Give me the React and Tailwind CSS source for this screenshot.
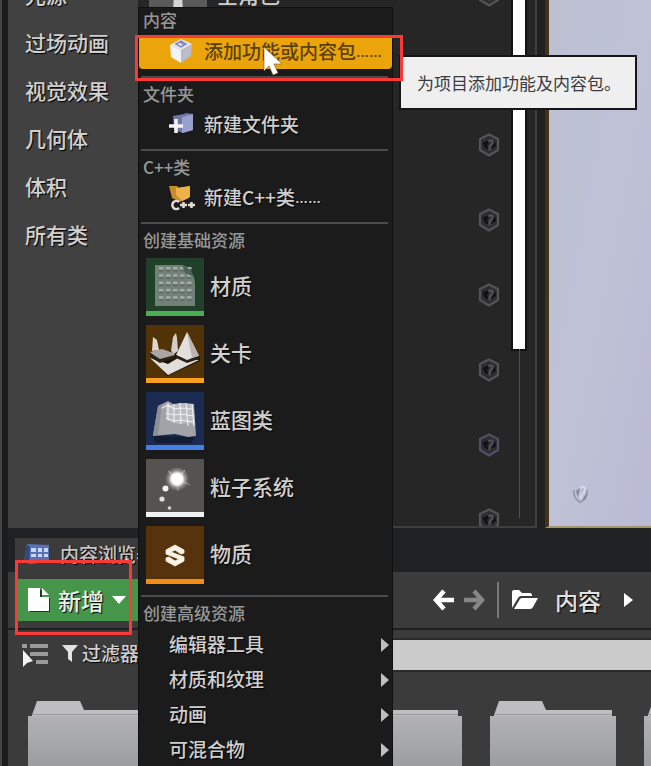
import React from "react";

const categories = ["光源", "过场动画", "视觉效果", "几何体", "体积", "所有类"];
const advanced = ["编辑器工具", "材质和纹理", "动画", "可混合物"];

function HelpIcon({ ring = "#545456" }) {
  return (
    <svg viewBox="0 0 24 24" className="h-6 w-6" aria-hidden="true">
      <path d="M12 1.500 21 6v11l-9 5.500L3 17V6z" fill="#2e2e30" stroke={ring} strokeWidth="2.200" strokeLinejoin="round" />
      <path d="M5.500 10 10 7.500 12 9l-2 3 2 5-4-2zM14 16l4-8 1 5z" fill="#111113" />
      <path d="M11.500 8.500c2-2 5-1 4 1.500-.6 1.500-2.500 2-3 4.500v3" fill="none" stroke={ring} strokeWidth="2" />
    </svg>
  );
}

function MaterialArt() {
  const cells = [];
  for (let r = 0; r < 5; r++) for (let c = 0; c < 5; c++) cells.push([c, r]);
  return (
    <svg viewBox="0 0 58 53" className="h-full w-full" aria-hidden="true">
      <rect width="58" height="53" fill="#20402a" />
      <path d="M9 7h28q6 2 10 10 2 4 2 9v22H9z" fill="#738078" />
      {cells.map(([c, r]) => (
        <g key={c + "-" + r}>
          <rect x={13 + c * 7} y={9 + r * 7.3} width="4.500" height="2.400" fill="#a3aca6" />
          <rect x={13 + c * 7} y={12 + r * 7.3} width="4.500" height="1.500" fill="#5c6b61" />
        </g>
      ))}
      <path d="M36 7q8 2 12 12l-9-4z" fill="#4c6453" />
    </svg>
  );
}

function LevelArt() {
  return (
    <svg viewBox="0 0 58 53" className="h-full w-full" aria-hidden="true">
      <rect width="58" height="53" fill="#513307" />
      <path d="M4 30 21 51l33-15v-5L30 24z" fill="#1d1509" />
      <path d="M4 33 22 39l10-6 21 2-31 15z" fill="#e2dedc" />
      <path d="m4 27 12-3 12 4 1 3-15 5z" fill="#aaa5a4" />
      <path d="m4 28 10 6 15-4v3l-15 5-10-6z" fill="#2c2116" />
      <path d="m6 26 1-14 4 3 2 10z" fill="#e1d7cd" />
      <path d="m25 26 2-14 3-4 1 5 1 13-4 3z" fill="#d4ceca" />
      <path d="M30 30 41 7l12 24-12 4z" fill="#e3dfdf" />
      <path d="m41 7 12 24-7 2z" fill="#bbb5b4" />
      <path d="m30 30 11 5 12-4v3l-12 4-11-5z" fill="#2c2116" />
    </svg>
  );
}

function BlueprintArt() {
  return (
    <svg viewBox="0 0 58 53" className="h-full w-full" aria-hidden="true">
      <rect width="58" height="53" fill="#1a2a50" />
      <path d="m7 44 42 1-4 6H10z" fill="#131c34" />
      <path d="M12 14 22 9l5 3 8-1 13 1 2 32-8 1-13-3-22 2z" fill="#a0a3a8" />
      <path d="m20 12 7 1 8-2 12 1 2 20-8-1-8 1-13-4z" fill="#b9bcc2" />
      <path d="M22 11v17M28 12v19M34 11l1 21M40 11l2 23M46 12l2 22M14 17l8-4 6 4 7-1 12 1M20 21l8 2 7-1 13 2M20 26l8 3 7-1 13 2" stroke="#eceef0" strokeWidth="1.200" fill="none" />
      <path d="m7 43 5-29 4-2-4 31z" fill="#8b8e94" />
    </svg>
  );
}

function ParticleArt() {
  return (
    <svg viewBox="0 0 58 53" className="h-full w-full" aria-hidden="true">
      <defs>
        <radialGradient id="glow">
          <stop offset="0.450" stopColor="#fff" />
          <stop offset="0.700" stopColor="#fff" stopOpacity="0.350" />
          <stop offset="1" stopColor="#fff" stopOpacity="0" />
        </radialGradient>
      </defs>
      <rect width="58" height="53" fill="#545352" />
      <path d="m31 20-9-8M31 20l13 6M31 20l1 12M31 20l8-9" stroke="#8d8d8d" strokeWidth="1.200" />
      <circle cx="31" cy="20" r="12" fill="url(#glow)" />
      <circle cx="19.500" cy="29.500" r="3" fill="#f4f4f2" />
      <circle cx="16" cy="40" r="2.600" fill="#dededc" />
      <circle cx="23.500" cy="49" r="1.800" fill="#d4d4d2" />
    </svg>
  );
}

function SubstanceArt() {
  return (
    <svg viewBox="0 0 58 53" className="h-full w-full" aria-hidden="true">
      <rect width="58" height="53" fill="#56330c" />
      <path d="m29 19 9 5v3l-3 1-6-4-4 2 13 5v4l-9 5-9-5v-3l3-1 6 4 4-2-13-5v-4z" fill="#fff4e6" stroke="#fff4e6" strokeWidth="0.800" strokeLinejoin="round" />
    </svg>
  );
}

const basics = [
  { name: "材质", art: MaterialArt, bar: "bg-[#4aae55]" },
  { name: "关卡", art: LevelArt, bar: "bg-[#f8a01c]" },
  { name: "蓝图类", art: BlueprintArt, bar: "bg-[#4581e4]" },
  { name: "粒子系统", art: ParticleArt, bar: "bg-[#f2f2f2]" },
  { name: "物质", art: SubstanceArt, bar: "bg-[#ef8d14]" },
];

function CubeIcon() {
  return (
    <svg viewBox="0 0 26 26" className="h-[26px] w-[26px]" aria-hidden="true">
      <path d="m2 7 11 5v13L3 19z" fill="#f2f3f7" />
      <path d="m13 12 11-6-1 12-10 7z" fill="#b9bccb" />
      <path d="M2 7 13 1l11 5-11 6z" fill="#e6e8f3" />
      <path d="m8 6 5-3 5 3-5 3zM12 4l4 3" fill="none" stroke="#8286c9" strokeWidth="1.500" />
    </svg>
  );
}

function NewFolderIcon() {
  return (
    <svg viewBox="0 0 26 26" className="h-[26px] w-[26px]" aria-hidden="true">
      <path d="m5 5 11-2 2-1 7 1v16l-10 3-9-3z" fill="#6f77a8" />
      <path d="M14 6 25 3v16l-11 3z" fill="#98a1cb" />
      <path d="M8 8v14M1 15h14" stroke="#f4f5fb" strokeWidth="3.500" />
    </svg>
  );
}

function CppIcon() {
  return (
    <svg viewBox="0 0 28 28" className="h-7 w-7" aria-hidden="true">
      <path d="M1 3h8l2 2 11-2-1 12-9 4-8-4z" fill="#c98a2c" />
      <path d="m8 5 14-2v11l-8 4-6-6z" fill="#edb249" />
      <path d="M11 19a4 4 0 1 0 0 6M12 22h7M15.500 19v6M20 22h7M23.500 19v6" fill="none" stroke="#e4dcd2" strokeWidth="2.500" />
    </svg>
  );
}

function Folder() {
  return (
    <svg viewBox="0 0 126 70" className="h-[70px] w-[126px] shrink-0" aria-hidden="true">
      <defs>
        <linearGradient id="folderFill" x1="0" y1="0" x2="0" y2="1">
          <stop offset="0" stopColor="#b2b2b4" />
          <stop offset="1" stopColor="#9a9c9d" />
        </linearGradient>
      </defs>
      <path d="m4 15 5-14h43l4 9h66v6H4z" fill="#bebec0" />
      <path d="M4 14.500h118" stroke="#98989a" />
      <path d="M0 16h126v54H0z" fill="url(#folderFill)" />
    </svg>
  );
}

function Header({ children }) {
  return <h2 className="h-6 pl-1 text-[17px] leading-6 text-[#989898]">{children}</h2>;
}

function Section({ children, className = "" }) {
  return (
    <section className={"relative pt-1.5 " + className}>
      <hr className="absolute inset-x-0 top-0 ml-0.5 mr-1 border-t-2 border-[#4b4b4b]" />
      {children}
    </section>
  );
}

function MenuItem({ icon, children }) {
  return (
    <button className="flex h-[38px] w-full items-center pb-0.5 pl-[29px] text-[19px] text-[#cfcfcf] [text-shadow:1px_1px_1px_#000]">
      <span className="flex w-9 items-center">{icon}</span>
      {children}
    </button>
  );
}

function Dots() {
  return <span className="pt-1 font-['Liberation_Sans'] text-[13px] font-bold">……</span>;
}

function CreateMenu() {
  return (
    <nav aria-label="新增" className="absolute bottom-0 left-[138px] top-[7px] w-[255px] overflow-hidden border-x border-t border-[#101010] bg-[#1b1b1b]">
      <section className="pb-[7px]">
        <Header>内容</Header>
        <button className="mt-[3px] flex h-[34px] w-full items-center rounded-sm bg-[#eba50a] pb-0.5 pl-[29px] text-[19px] text-[#5a400a]">
          <span className="flex w-9 items-center">
            <CubeIcon />
          </span>
          添加功能或内容包
          <Dots />
        </button>
      </section>
      <Section className="pb-[5px]">
        <Header>文件夹</Header>
        <MenuItem icon={<NewFolderIcon />}>新建文件夹</MenuItem>
      </Section>
      <Section className="pb-[5px]">
        <Header>C++类</Header>
        <MenuItem icon={<CppIcon />}>
          新建C++类
          <Dots />
        </MenuItem>
      </Section>
      <Section className="pb-[11px]">
        <Header>创建基础资源</Header>
        <div className="flex flex-col gap-[9px] pl-[7px] pt-1.5">
          {basics.map(({ name, art: Art, bar }) => (
            <button key={name} className="flex h-[58px] items-center gap-1.5 text-[21px] text-[#cfcfcf] [text-shadow:1px_1px_1px_#000]">
              <span className="flex h-[58px] w-[58px] flex-col">
                <span className="block h-[53px]">
                  <Art />
                </span>
                <span className={"block h-[5px] " + bar} />
              </span>
              <span className="pb-0.5">{name}</span>
            </button>
          ))}
        </div>
      </Section>
      <Section>
        <Header>创建高级资源</Header>
        <div className="pt-0.5">
          {advanced.map((name) => (
            <button key={name} className="flex h-[35px] w-full items-center justify-between pl-[30px] pr-[3px] text-[19px] text-[#cfcfcf] [text-shadow:1px_1px_1px_#000]">
              {name}
              <svg viewBox="0 0 8 14" className="h-3.5 w-2" aria-hidden="true">
                <path d="m0 0 8 7-8 7z" fill="#bfbfbf" />
              </svg>
            </button>
          ))}
        </div>
      </Section>
    </nav>
  );
}

function PlaceActors() {
  return (
    <div className="flex min-h-0 flex-1 bg-[#1c1c1c]">
      <aside className="w-[130px] shrink-0 overflow-hidden bg-[#414141]">
        <ul className="-mt-[29px] pl-[17px]">
          {categories.map((c) => (
            <li key={c}>
              <button className="h-12 text-[21px] text-[#d0d0d0] [text-shadow:1px_1px_1px_#000]">{c}</button>
            </li>
          ))}
        </ul>
      </aside>
      <div className="flex w-[399px] shrink-0 border-b-2 border-r-2 border-[#3f3f40] bg-[#262627]">
        <div className="flex-1 overflow-hidden">
          <ul className="-mt-[43px]">
            {[0, 1, 2, 3, 4, 5, 6, 7].map((i) => (
              <li key={i} className="flex h-[75px] items-center pl-[11px] pr-3">
                {i === 0 && (
                  <>
                    <svg viewBox="0 0 58 58" className="h-[58px] w-[58px]" aria-hidden="true">
                      <rect width="58" height="58" fill="#5a5a5a" />
                      <path d="M25 30h8l2 28H23z" fill="#d5d5d5" />
                    </svg>
                    <span className="pl-[10px] text-[21px] text-[#d0d0d0]">空角色</span>
                  </>
                )}
                <button aria-label="帮助" className="ml-auto">
                  <HelpIcon ring={i === 6 ? "#524e66" : "#545456"} />
                </button>
              </li>
            ))}
          </ul>
        </div>
        <div className="mb-2 mr-2.5 flex w-3 flex-col items-center">
          <div className="h-[349px] w-3 bg-white ring-2 ring-[#111]" />
          <div className="w-px flex-1 bg-[#505050]" />
        </div>
      </div>
      <div className="w-2 shrink-0 bg-[#202020]" />
      <div className="flex flex-1 items-end border-b-2 border-l-4 border-b-[#a1966c] border-l-[#42341a] bg-linear-to-br from-[#bcc0d0] via-[#bfc2d7] to-[#b9bad3] pb-[21px] pl-[23px]">
        <svg viewBox="0 0 18 22" className="h-[22px] w-[18px]" aria-hidden="true">
          <path d="M2 7q-1 8 6 12 8-4 7-12" fill="none" stroke="#9a9db0" strokeWidth="2" />
          <path d="m4 8 4-3-2 9zM10 18l5-9-1 7z" fill="#85889c" />
          <path d="M8 5q5-3 5 1t-4 6v5" fill="none" stroke="#d5d7e4" strokeWidth="2" />
        </svg>
      </div>
    </div>
  );
}

function ContentBrowser() {
  return (
    <div className="h-[238px] shrink-0 overflow-hidden bg-[#3b3b3c]">
      <div className="flex h-[44px] bg-[#202122] pl-[7px] pt-[10px]">
        <div className="flex w-[150px] items-center gap-2.5 bg-[#3b3b3c] pb-0.5 pl-[9px]">
          <svg viewBox="0 0 26 22" className="h-[22px] w-[26px] shrink-0" aria-hidden="true">
            <path d="m3 1 22 1v17l-20 2-5-3z" fill="#5870b4" />
            <path d="m3 1 3 3-1 17-5-3z" fill="#34477f" />
            <path d="M7 5h5v4H7zM14 5h4v4h-4zM20 5h4v4h-4zM7 11h5v3H7zM14 11h4v3h-4zM20 11h4v3h-4z" fill="#ccd7f2" />
          </svg>
          <span className="whitespace-nowrap text-[19px] text-[#c6c6c6] [text-shadow:1px_1px_1px_#000]">内容浏览器</span>
        </div>
      </div>
      <div className="flex h-[58px] items-center border-b-2 border-[#1f1f1f] pl-2.5">
        <button className="flex h-[42px] w-[122px] items-center bg-[#45964b] pl-2.5 text-[23px] text-[#e8f0e8] [text-shadow:1px_1px_1px_#000]">
          <svg viewBox="0 0 22 24" className="mr-2 h-6 w-[22px]" aria-hidden="true">
            <path d="M2 2h12v8h9v14H2z" fill="#1d3a20" />
            <path d="M0 0h12v9h9v14H0z" fill="#fff" />
            <path d="m14 0 7 7h-7z" fill="#fff" />
          </svg>
          新增
          <svg viewBox="0 0 14 8" className="ml-2 h-2 w-3.5" aria-hidden="true">
            <path d="M0 0h14L7 8z" fill="#fff" />
          </svg>
        </button>
        <div className="ml-[293px] flex items-center">
          <button aria-label="后退">
            <svg viewBox="0 0 22 22" className="h-[22px] w-[22px]" aria-hidden="true">
              <path d="M11 2 3 11l8 9M3 11h18" fill="none" stroke="#fff" strokeWidth="4.500" />
            </svg>
          </button>
          <button aria-label="前进" className="ml-2">
            <svg viewBox="0 0 22 22" className="h-[22px] w-[22px]" aria-hidden="true">
              <path d="m11 2 8 9-8 9M19 11H1" fill="none" stroke="#878787" strokeWidth="4.500" />
            </svg>
          </button>
          <span className="ml-3 h-9 w-0.5 bg-[#797979]" />
          <button className="ml-3 flex items-center text-[23px] text-[#e2e2e2] [text-shadow:1px_1px_1px_#000]">
            <svg viewBox="0 0 27 20" className="mr-[17px] h-5 w-[27px]" aria-hidden="true">
              <path d="M1 18V2q0-2 2-2h5l3 3h8q2 0 2 3H10q-2 0-3 2z" fill="#fff" />
              <path d="m3 19 6-10q1-1 2-1h16l-5 9q-1 2-3 2z" fill="#fff" />
            </svg>
            内容
          </button>
          <svg viewBox="0 0 9 14" className="ml-[23px] h-3.5 w-[9px]" aria-hidden="true">
            <path d="m0 0 9 7-9 7z" fill="#fff" />
          </svg>
        </div>
      </div>
      <div className="flex h-[50px] items-center pl-3.5">
        <button aria-label="来源面板">
          <svg viewBox="0 0 26 24" className="h-6 w-[26px]" aria-hidden="true">
            <path d="M0 3h5M8 3h18M8 11h18M14 19h12" stroke="#9a9a9a" strokeWidth="4" />
            <path d="M1 7v17l4-4 6-2z" fill="#f4f4f4" />
          </svg>
        </button>
        <button className="ml-[14px] flex shrink-0 items-center pb-1 text-[19px] text-[#d0d0d0] [text-shadow:1px_1px_1px_#000]">
          <svg viewBox="0 0 16 17" className="mr-1 h-[17px] w-4" aria-hidden="true">
            <path d="M0 0h16l-6 7v10l-4-3V7z" fill="#e2e2e2" />
          </svg>
          过滤器
        </button>
        <input aria-label="搜索" className="ml-5 h-[34px] min-w-0 flex-1 border-y-2 border-[#2a2a2a] bg-[#cbcbcb]" />
      </div>
      <div className="flex gap-7 pl-5 pt-5">
        {[0, 1, 2, 3, 4].map((i) => (
          <Folder key={i} />
        ))}
      </div>
    </div>
  );
}

export default function App() {
  return (
    <div className="relative flex h-screen overflow-hidden bg-[#1c1c1c] font-['Noto_Sans_CJK_SC',sans-serif] font-medium">
      <div className="w-2 shrink-0 border-l-2 border-[#454545] bg-[#1c1c1c]" />
      <main className="flex min-w-0 flex-1 flex-col">
        <PlaceActors />
        <ContentBrowser />
      </main>

      <CreateMenu />

      <div role="tooltip" className="absolute left-[399px] top-[55px] flex h-[55px] w-[238px] items-center border-2 border-[#161618] bg-[#efeff0] pl-4 text-[17px] font-normal text-[#3c3c40]">
        为项目添加功能及内容包。
      </div>

      <div className="pointer-events-none absolute left-[135px] top-[35px] h-[46px] w-[268px] border-3 border-[#fb3a37]" />
      <div className="pointer-events-none absolute left-[15px] top-[560px] h-[75px] w-[117px] border-3 border-[#fb3a37]" />

      <svg viewBox="0 0 20 30" className="pointer-events-none absolute left-[263px] top-[46px] h-[30px] w-5" aria-hidden="true">
        <path d="M1 1v24l5-5 4 9 5-2-4-9h8z" fill="#fff" stroke="#6b5a2a" strokeWidth="0.600" />
      </svg>
    </div>
  );
}
